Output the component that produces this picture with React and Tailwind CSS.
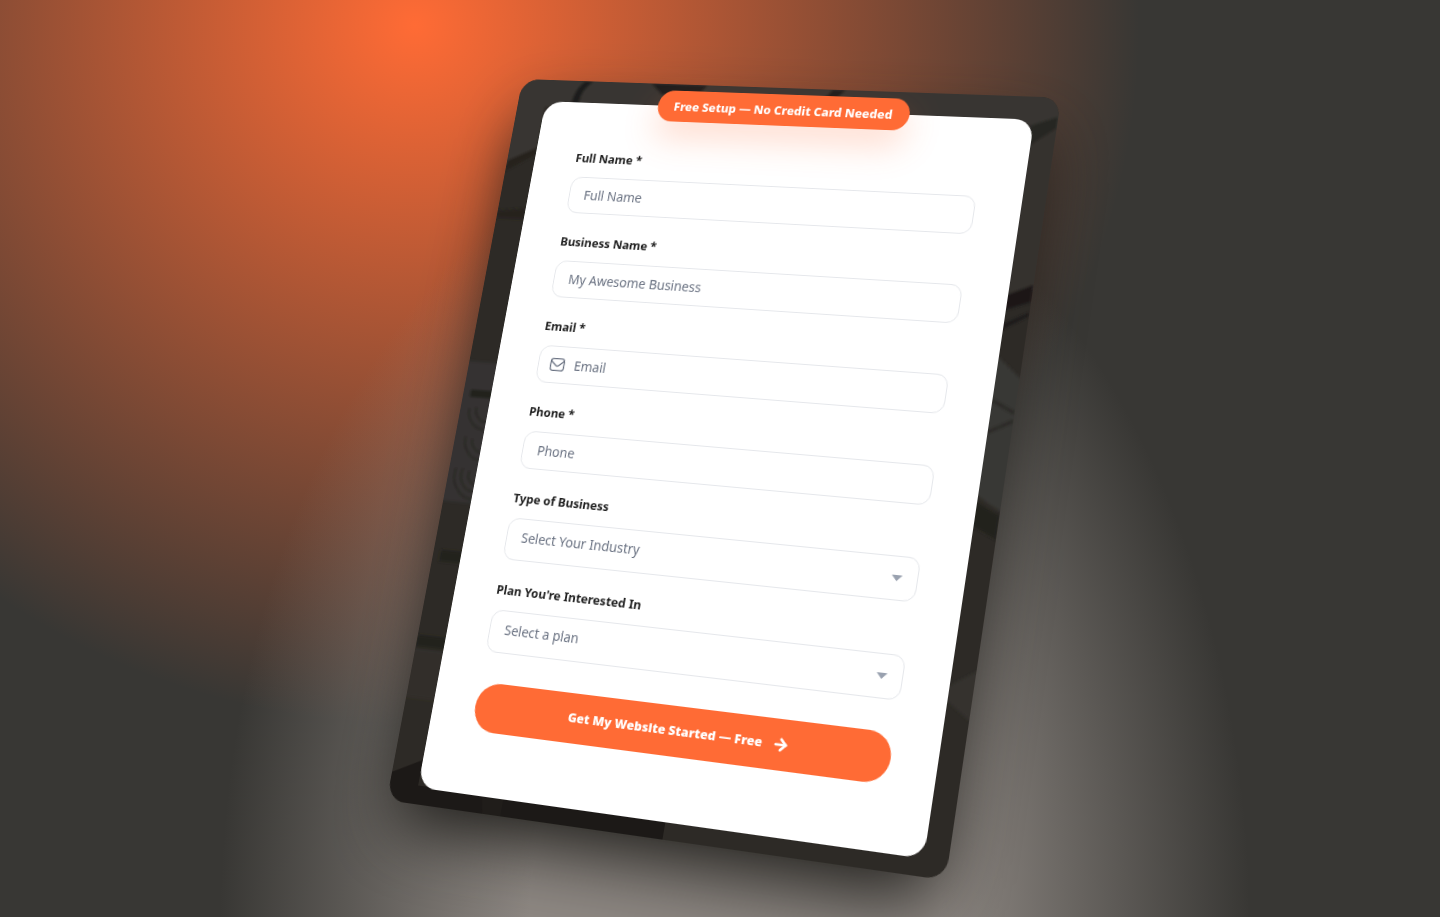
import React, { useState } from "react";
import { LuArrowRight } from "react-icons/lu";

const industries = ["Restaurant", "Retail", "Construction", "Health & Beauty", "Professional Services"];
const plans = ["Starter", "Growth", "Premium"];

function MailIcon() {
  return (
    <svg width="18" height="18" viewBox="0 0 24 24" fill="none" stroke="currentColor" strokeWidth="1.8" strokeLinecap="round" strokeLinejoin="round" aria-hidden="true">
      <rect x="2" y="3.5" width="20" height="17" rx="4" />
      <path d="M2.5 7l7 6a3.8 3.8 0 0 0 5 0l7-6" />
    </svg>
  );
}

function TextField({ id, label, placeholder, type = "text", icon }) {
  return (
    <div className="flex flex-col gap-[11px]">
      <label htmlFor={id} className="text-[13px] leading-5 font-bold text-[#1f1f1f]">
        {label}
      </label>
      <div className="flex h-10 items-center gap-[10px] rounded-xl border border-gray-200 bg-white px-4 text-gray-500 has-[svg]:pl-3">
        {icon}
        <input
          id={id}
          type={type}
          placeholder={placeholder}
          className="min-w-0 flex-1 bg-transparent text-sm text-gray-800 outline-none placeholder:text-gray-500"
        />
      </div>
    </div>
  );
}

function SelectField({ id, label, placeholder, options }) {
  const [value, setValue] = useState("");

  return (
    <div className="flex flex-col gap-[11px]">
      <label htmlFor={id} className="text-[13px] leading-5 font-bold text-[#1f1f1f]">
        {label}
      </label>
      <div className="relative">
        <select
          id={id}
          value={value}
          onChange={(e) => setValue(e.target.value)}
          className="h-11 w-full appearance-none rounded-xl border border-gray-200 bg-white px-4 pb-1 text-sm text-gray-500 outline-none"
        >
          <option value="">{placeholder}</option>
          {options.map((option) => (
            <option key={option} value={option}>{option}</option>
          ))}
        </select>
        <svg className="pointer-events-none absolute top-1/2 right-4 -translate-y-1/2 text-gray-400" width="11" height="6" viewBox="0 0 11 6" fill="currentColor" aria-hidden="true">
          <path d="M0 0h11L5.5 6z" />
        </svg>
      </div>
    </div>
  );
}

// Dim workshop scene that shows around the form
function CardBackdrop() {
  return (
    <svg className="absolute inset-0 h-full w-full" viewBox="0 0 592 777" preserveAspectRatio="none" aria-hidden="true">
      <defs>
        <filter id="soft" x="-5%" y="-5%" width="110%" height="110%">
          <feGaussianBlur stdDeviation="1.5" />
        </filter>
      </defs>
      <rect width="592" height="777" fill="#2d2a26" />
      <g filter="url(#soft)">
        <path d="M-4-4h600v74l-30-10V30H32v50L-4 98z" fill="#373633" />
        <path d="M566 30h30v168l-30 12z" fill="#34322f" />
        <path d="M566 30l26-10v12l-26 20z" fill="#282622" />
        <path d="M84 0q-16 12-12 30h-10q0-20 12-30zM150 0h64l-10 12h-40zM352 0h14l-14 16h-12z" fill="#1f1d1a" />
        <path d="M0 92l32-16v8L0 104zM0 148l32-4v12H0z" fill="#25231f" />
        <path d="M-4 314h38v150H-4z" fill="#343330" />
        <g fill="none" stroke="#282623" strokeWidth="2">
          <path d="M18 362a15 15 0 0 0 14 16M10 364a22 22 0 0 0 22 22" />
          <path d="M20 396a14 14 0 0 0 14 14M12 394a22 22 0 0 0 22 24" />
          <path d="M24 430a10 10 0 0 0 10 14M16 428a18 18 0 0 0 18 24M8 428a26 26 0 0 0 26 32" />
        </g>
        <path d="M8 344h26v8H8zM8 516h26v12H8zM0 606h34v12H0z" fill="#24221e" />
        <path d="M-4 620h38v50H-4z" fill="#302e2a" />
        <path d="M566 206l26-12v18l-26 10zM566 236l26-14v4l-26 16z" fill="#1c1917" />
        <path d="M566 268l30 24v132l-30-16z" fill="#383734" />
        <path d="M566 346l26-14M566 312l26 12" stroke="#2b2926" strokeWidth="4" />
        <path d="M566 414l26 12v24l-26-12z" fill="#24221e" />
        <path d="M566 596l30-20v52l-30-20z" fill="#34332f" />
      </g>
      <path d="M0 748l32-16v26h272v19H0z" fill="#1c1917" />
      <path d="M104 758h24v19h-20z" fill="#201d1a" />
    </svg>
  );
}

export default function App() {
  return (
    <main className="flex min-h-screen items-center justify-center overflow-hidden bg-[#383734] bg-[radial-gradient(515px_800px_at_735px_930px,#8e8883_0%,#8e8883_40%,rgba(142,136,131,0)_100%),radial-gradient(725px_700px_at_415px_25px,#ff6b35_0%,rgba(255,107,53,0)_100%)] px-4 pt-15 pb-18 font-['Noto_Sans',sans-serif]">
      <div className="relative w-full max-w-[592px] rounded-[20px] pt-6 pr-6 pb-[17px] pl-8 shadow-[0_32px_72px_-12px_#1c1b18] transform-[perspective(2800px)_rotateX(15deg)_rotateY(-20deg)_rotateZ(10deg)]">
        <div className="absolute inset-0 overflow-hidden rounded-[20px]">
          <CardBackdrop />
        </div>

        <form
          onSubmit={(e) => e.preventDefault()}
          className="relative flex flex-col gap-[21px] rounded-[20px] bg-white px-[47px] pt-[51px] pb-16"
        >
          <div className="absolute top-0 left-1/2 -translate-x-1/2 -translate-y-1/2 rounded-full bg-[#ff6b35] px-[18px] py-[7px] text-[13px] leading-5 font-extrabold whitespace-nowrap text-white shadow-[0_16px_36px_rgba(255,107,53,0.25)]">
            Free Setup — No Credit Card Needed
          </div>

          <TextField id="fullName" label="Full Name *" placeholder="Full Name" />
          <TextField id="businessName" label="Business Name *" placeholder="My Awesome Business" />
          <TextField id="email" type="email" label="Email *" placeholder="Email" icon={<MailIcon />} />
          <TextField id="phone" type="tel" label="Phone *" placeholder="Phone" />
          <SelectField id="industry" label="Type of Business" placeholder="Select Your Industry" options={industries} />
          <SelectField id="plan" label="Plan You're Interested In" placeholder="Select a plan" options={plans} />

          <button
            type="submit"
            className="mt-[10px] flex h-[50px] items-center justify-center gap-[10px] rounded-full bg-[#ff6b35] text-[13px] font-black text-white"
          >
            Get My Website Started — Free
            <LuArrowRight size={18} strokeWidth={3.5} />
          </button>
        </form>
      </div>
    </main>
  );
}
